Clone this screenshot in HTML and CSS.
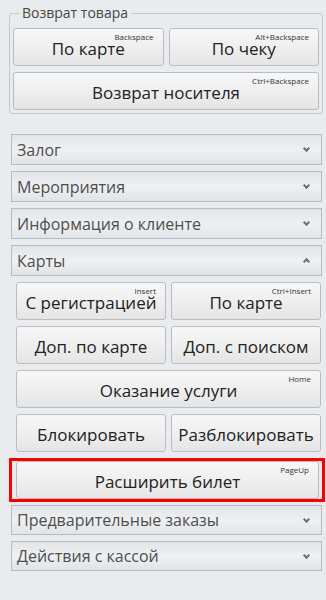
FILE: index.html
```html
<!DOCTYPE html>
<html lang="ru">
<head>
    <meta charset="UTF-8">
    <title>Касса</title>
    <link rel="stylesheet" href="styles.css">
</head>
<body>
    <div class="panel">
        <fieldset class="group">
            <legend>Возврат товара</legend>
            <div class="btn-grid">
                <button class="btn">По карте<span class="key">Backspace</span></button>
                <button class="btn">По чеку<span class="key">Alt+Backspace</span></button>
                <button class="btn wide">Возврат носителя<span class="key">Ctrl+Backspace</span></button>
            </div>
        </fieldset>

        <div class="sections">
            <div class="section-head">Залог<span class="chev down"></span></div>
            <div class="section-head">Мероприятия<span class="chev down"></span></div>
            <div class="section-head">Информация о клиенте<span class="chev down"></span></div>
            <div class="section-head">Карты<span class="chev up"></span></div>
            <div class="section-body">
                <div class="btn-grid">
                    <button class="btn">С регистрацией<span class="key">Insert</span></button>
                    <button class="btn">По карте<span class="key">Ctrl+Insert</span></button>
                    <button class="btn">Доп. по карте</button>
                    <button class="btn">Доп. с поиском</button>
                    <button class="btn wide">Оказание услуги<span class="key">Home</span></button>
                    <button class="btn">Блокировать</button>
                    <button class="btn">Разблокировать</button>
                    <div class="highlight wide">
                        <button class="btn">Расширить билет<span class="key">PageUp</span></button>
                    </div>
                </div>
            </div>
            <div class="section-head short">Предварительные заказы<span class="chev down"></span></div>
            <div class="section-head short">Действия с кассой<span class="chev down"></span></div>
        </div>
    </div>
</body>
</html>
```

FILE: styles.css
```css
body {
    margin: 0;
    background: #e9ecef;
    font-family: 'Open Sans', 'Noto Sans', sans-serif;
    color: #222;
}

.panel {
    width: 326px;
    height: 600px;
    padding-top: 4px;
    box-sizing: border-box;
}

.group {
    margin: 0 3px 0 9px;
    padding: 6px 3px 3px 3px;
    border: 1px solid #c4c8cc;
    border-radius: 3px;
}

.group legend {
    margin-left: 6px;
    padding: 0 3px;
    font-size: 14px;
    line-height: 18px;
    color: #4a4640;
}

.btn-grid {
    display: grid;
    grid-template-columns: 1fr 1fr;
    column-gap: 5px;
    row-gap: 6px;
}

.wide {
    grid-column: span 2;
}

.btn {
    position: relative;
    height: 38px;
    padding: 2px 0 0;
    border: 1px solid #b9bdc2;
    border-radius: 3px;
    background: linear-gradient(#f7f7f7, #efefef 50%, #e5e5e5);
    font-family: inherit;
    font-size: 17px;
    color: #222;
    text-align: center;
    cursor: pointer;
}

.key {
    position: absolute;
    top: 3px;
    right: 9px;
    font-size: 8px;
    line-height: 10px;
    color: #333;
}

.sections {
    margin: 20px 4px 0 11px;
    display: flex;
    flex-direction: column;
    gap: 6px;
}

.section-head {
    display: flex;
    align-items: center;
    justify-content: space-between;
    height: 31px;
    box-sizing: border-box;
    padding: 0 12px 0 5px;
    border: 1px solid #b6bbc0;
    background: linear-gradient(#e2e5e8, #eef0f2 50%, #e1e4e7);
    font-size: 16px;
    color: #4e4e4e;
}

.section-head.short {
    height: 30px;
}

.chev {
    width: 3px;
    height: 3px;
    border-right: 2px solid #66707a;
    border-bottom: 2px solid #66707a;
    transform: rotate(45deg);
    margin-bottom: 2px;
}

.chev.up {
    transform: rotate(-135deg);
    margin-bottom: -2px;
}

.section-body {
    padding: 0 1px 0 5px;
    margin-bottom: -3px;
}

.highlight {
    display: flex;
    flex-direction: column;
    margin: 0 -4px 0 -7px;
    padding: 0 3px 0 4px;
    border: 3px solid #ff0000;
}
```
